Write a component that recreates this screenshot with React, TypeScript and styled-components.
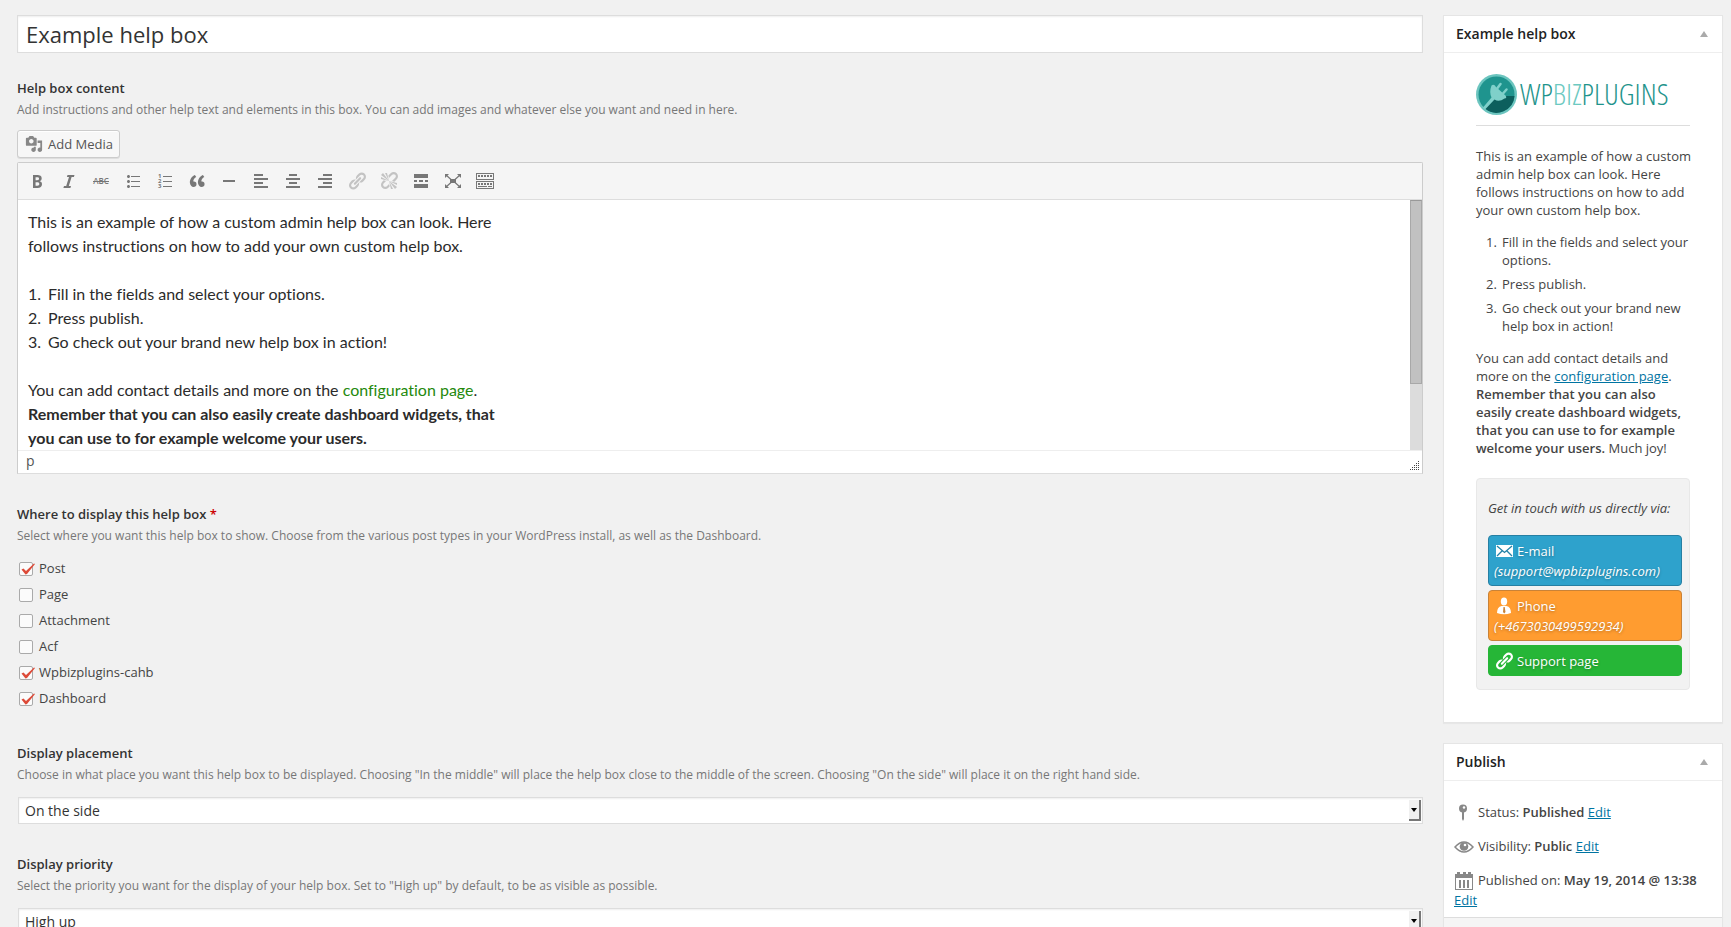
import React from "react";
import styled, { createGlobalStyle, css } from "styled-components";

const GlobalStyle = createGlobalStyle`
  *, *::before, *::after { box-sizing: border-box; }
  html { scrollbar-width: none; }
  body {
    margin: 0;
    background: #f1f1f1;
    color: #444;
    font-family: "Open Sans", sans-serif;
    font-size: 13px;
    line-height: 18px;
  }
  a { color: #0074a2; }
  strong { font-weight: 600; }
  p, h1, h2, ol, ul { margin: 0; padding: 0; }
  button, input, select { font-family: inherit; }
`;

const Page = styled.div`
  display: flex;
  align-items: flex-start;
  gap: 20px;
  padding: 15px 8px 20px 17px;
`;

const Main = styled.main`
  flex: 1;
  min-width: 0;
`;

const Aside = styled.aside`
  flex: none;
  width: 280px;
  display: flex;
  flex-direction: column;
  gap: 20px;
`;

const TitleInput = styled.input`
  display: block;
  width: 100%;
  height: 38px;
  padding: 0 8px;
  border: 1px solid #ddd;
  border-radius: 0;
  background: #fff;
  box-shadow: inset 0 1px 2px rgba(0, 0, 0, 0.07);
  color: #333;
  font-size: 22px;
  outline: none;
`;

const Field = styled.section`
  margin-top: 31px;
`;

const FirstField = styled(Field)`
  margin-top: 26px;
`;

const labelText = css`
  display: block;
  color: #333;
  font-size: 13px;
  font-weight: 600;
  line-height: 18px;
`;

const FieldTitle = styled.h2`
  ${labelText}
`;

const FieldLabel = styled.label`
  ${labelText}
`;

const Required = styled.span`
  color: #c00;
`;

const Description = styled.p`
  margin: 4px 0 11px;
  color: #777;
  font-size: 12px;
  line-height: 18px;
`;

const MediaButton = styled.button`
  display: flex;
  align-items: center;
  gap: 5px;
  height: 28px;
  margin-bottom: 4px;
  padding: 0 6px 0 7px;
  border: 1px solid #ccc;
  border-radius: 3px;
  background: #f7f7f7;
  box-shadow: inset 0 1px 0 #fff, 0 1px 0 rgba(0, 0, 0, 0.08);
  color: #555;
  font-size: 13px;
`;

const Editor = styled.div`
  border: 1px solid #ccc;
  border-bottom-color: #ddd;
  border-radius: 2px 2px 0 0;
  background: #fff;
`;

const Toolbar = styled.div`
  display: flex;
  gap: 4px;
  padding: 4px 5px;
  border-bottom: 1px solid #ddd;
  background: #f5f5f5;
`;

const ToolButton = styled.button`
  display: grid;
  place-items: center;
  width: 28px;
  height: 28px;
  padding: 0;
  border: 0;
  background: none;
  color: #777;
  &:disabled { color: #c3c3c3; }
`;

const EditorBody = styled.div`
  display: flex;
  height: 250px;
`;

const numbered = css`
  ol { list-style: none; counter-reset: step; }
  li { display: flex; counter-increment: step; }
  li::before { content: counter(step) "."; flex: none; }
`;

const EditorText = styled.div`
  ${numbered}
  flex: 1;
  min-width: 0;
  padding: 10px 10px 0;
  overflow: hidden;
  color: #2b2b2b;
  font-family: Lato, sans-serif;
  font-size: 16px;
  font-variant-ligatures: none;
  line-height: 24px;
  outline: none;
  p, ol { max-width: 474px; margin-bottom: 24px; }
  li::before { width: 20px; }
  strong { font-weight: 700; }
  a { color: #24890d; text-decoration: none; }
`;

const ScrollTrack = styled.div`
  width: 12px;
  background: #dcdcdc;
`;

const ScrollThumb = styled.div`
  height: 184px;
  border: 1px solid #a8a8a8;
  border-top-color: #999;
  background: #c1c1c1;
`;

const StatusBar = styled.div`
  display: flex;
  align-items: center;
  justify-content: space-between;
  height: 23px;
  padding: 0 2px 2px 8px;
  border-top: 1px solid #eee;
  color: #555;
  font-size: 14px;
  svg { align-self: flex-end; }
`;

const CheckList = styled.ul`
  margin-top: -1px;
  padding-bottom: 2px;
  list-style: none;
`;

const CheckLabel = styled.label`
  display: flex;
  align-items: center;
  gap: 6px;
  height: 26px;
  padding-left: 2px;
  color: #444;
`;

const CheckBoxWrap = styled.span`
  position: relative;
  display: grid;
  width: 14px;
  height: 14px;
  margin-top: 2px;
  svg {
    position: absolute;
    left: 2px;
    top: 1px;
    visibility: hidden;
    pointer-events: none;
  }
  input:checked + svg { visibility: visible; }
`;

const CheckInput = styled.input`
  appearance: none;
  width: 14px;
  height: 14px;
  margin: 0;
  border: 1px solid #aaa;
  border-radius: 2px;
  background: #fbfbfb;
`;

const SelectWrap = styled.div`
  position: relative;
  margin: 13px 0 3px 1px;
`;

const Select = styled.select`
  appearance: none;
  display: block;
  width: 100%;
  height: 27px;
  padding: 0 16px 0 6px;
  border: 1px solid #ddd;
  border-radius: 0;
  background: #fff;
  box-shadow: inset 0 1px 2px rgba(0, 0, 0, 0.07);
  color: #333;
  font-size: 14px;
`;

const SelectArrow = styled.span`
  position: absolute;
  top: 3px;
  right: 2px;
  bottom: 3px;
  display: grid;
  place-items: center;
  width: 12px;
  border-right: 2px solid #777;
  border-bottom: 2px solid #777;
  background: #f0f0f0;
  pointer-events: none;
`;

const Box = styled.section`
  border: 1px solid #e5e5e5;
  background: #fff;
  box-shadow: 0 1px 1px rgba(0, 0, 0, 0.04);
`;

const BoxHeader = styled.header`
  display: flex;
  align-items: center;
  justify-content: space-between;
  height: 37px;
  padding: 0 12px;
  border-bottom: 1px solid #eee;
`;

const BoxTitle = styled.h2`
  color: #222;
  font-size: 14px;
  font-weight: 600;
  line-height: 20px;
`;

const ToggleButton = styled.button`
  display: grid;
  place-items: center;
  width: 12px;
  height: 20px;
  padding: 0;
  border: 0;
  background: none;
  color: #aaa;
`;

const HelpBody = styled.div`
  padding: 20px 32px 32px;
`;

const Logo = styled.div`
  display: flex;
  align-items: center;
  gap: 3px;
  height: 42px;
`;

const LogoText = styled.span`
  color: #1f948c;
  font-family: "Open Sans Condensed Light", "Open Sans Light Condensed", "Open Sans Condensed", Lato, sans-serif;
  font-size: 30px;
  font-weight: 300;
  line-height: 42px;
`;

const LogoAccent = styled.span`
  color: #6cc9c1;
`;

const Divider = styled.hr`
  margin: 10px 0 21px;
  border: 0;
  border-top: 1px solid #ddd;
`;

const HelpText = styled.div`
  ${numbered}
  margin-right: -4px;
  ol { margin: 14px 0; padding-left: 10px; }
  li { margin-bottom: 6px; }
  li::before { width: 16px; }
`;

const ContactBox = styled.div`
  display: flex;
  flex-direction: column;
  gap: 4px;
  margin-top: 21px;
  padding: 20px 7px 13px 11px;
  border: 1px solid #e8e8e8;
  border-radius: 4px;
  background: #f2f2f2;
`;

const ContactIntro = styled.p`
  margin-bottom: 14px;
  font-style: italic;
`;

const ContactLink = styled.a<{ $bg: string; $line: string }>`
  display: block;
  padding: 5px 5px 4px;
  border: 1px solid ${(p) => p.$line};
  border-radius: 4px;
  background: ${(p) => p.$bg};
  color: #fff;
  line-height: 20px;
  text-decoration: none;
  text-shadow: 0 1px 3px rgba(0, 0, 0, 0.3);
`;

const ContactName = styled.span`
  display: flex;
  align-items: center;
  gap: 3px;
`;

const ContactDetail = styled.em`
  display: block;
`;

const PublishBody = styled.div`
  padding: 14px 10px 0;
`;

const PublishRow = styled.div`
  padding: 7px 0;
  line-height: 20px;
  svg {
    margin: -4px 4px -2px 0;
    vertical-align: middle;
    color: #888;
  }
`;

const PublishFooter = styled.footer`
  height: 58px;
  border-top: 1px solid #ddd;
  background: #f5f5f5;
`;

type IconProps = { size?: number; children: React.ReactNode };

const Icon = ({ size = 20, children }: IconProps) => (
  <svg width={size} height={size} viewBox="0 0 20 20" fill="currentColor" aria-hidden="true">
    {children}
  </svg>
);

const LINK =
  "M17.74 2.76c1.68 1.69 1.68 4.41 0 6.1l-1.53 1.52c-1.12 1.12-2.7 1.47-4.14 1.09l2.62-2.61.76-.77.76-.76c.84-.84.84-2.2 0-3.04-.84-.85-2.2-.85-3.04 0l-.77.76-3.38 3.38c-.37-1.44-.02-3.02 1.1-4.14l1.52-1.53c1.69-1.68 4.42-1.68 6.1 0zM8.59 13.43l5.34-5.34c.42-.42.42-1.1 0-1.52-.44-.43-1.13-.39-1.53 0l-5.33 5.34c-.42.42-.42 1.1 0 1.52.44.43 1.13.39 1.52 0zm-.76 2.29l4.14-4.15c.38 1.44.03 3.02-1.09 4.14l-1.52 1.53c-1.69 1.68-4.41 1.68-6.1 0-1.68-1.68-1.68-4.42 0-6.1l1.53-1.52c1.12-1.12 2.7-1.47 4.14-1.1l-4.14 4.15c-.85.84-.85 2.2 0 3.05.84.84 2.2.84 3.04 0z";

const glyph = (size: number, weight: number) => ({
  fontFamily: '"Open Sans", sans-serif',
  fontSize: size,
  fontWeight: weight,
});

const tools: { name: string; disabled?: boolean; art: React.ReactNode }[] = [
  {
    name: "Bold",
    art: (
      <path d="M6 4v13h4.54c1.37 0 2.46-.33 3.26-1 .8-.66 1.2-1.58 1.2-2.77 0-.84-.17-1.51-.51-2.01s-.9-.85-1.67-1.03v-.09c.57-.1 1.02-.4 1.36-.9s.51-1.13.51-1.91c0-1.14-.39-1.98-1.17-2.5C12.75 4.26 11.5 4 9.78 4H6zm2.57 5.15V6.26h1.36c.73 0 1.27.11 1.61.32.34.22.51.58.51 1.07 0 .54-.16.92-.47 1.15s-.82.35-1.51.35h-1.5zm0 2.19h1.6c1.44 0 2.16.53 2.16 1.61 0 .6-.17 1.05-.51 1.34s-.86.43-1.57.43H8.57v-3.38z" />
    ),
  },
  { name: "Italic", art: <path d="M15.500 4h-7l-.6 2h2.100l-2.800 9H5l-.6 2h7l.6-2H9.800l2.800-9h2.300z" /> },
  {
    name: "Strikethrough",
    art: (
      <>
        <text x="10" y="13" textAnchor="middle" style={glyph(8, 600)}>ABC</text>
        <path d="M2 10h16v1H2z" />
      </>
    ),
  },
  {
    name: "Bulleted list",
    art: (
      <path d="M5.5 7C4.67 7 4 6.33 4 5.5 4 4.68 4.67 4 5.5 4 6.32 4 7 4.68 7 5.5 7 6.33 6.32 7 5.5 7zM8 5h9v1H8V5zm-2.5 7c-.83 0-1.5-.67-1.5-1.5C4 9.68 4.67 9 5.5 9c.82 0 1.5.68 1.5 1.5 0 .83-.68 1.5-1.5 1.5zM8 10h9v1H8v-1zm-2.5 7c-.83 0-1.5-.67-1.5-1.5 0-.82.67-1.5 1.5-1.5.82 0 1.5.68 1.5 1.5 0 .83-.68 1.5-1.5 1.5zM8 15h9v1H8v-1z" />
    ),
  },
  {
    name: "Numbered list",
    art: (
      <>
        <text x="3" y="7" style={glyph(6, 700)}>1</text>
        <text x="3" y="12" style={glyph(6, 700)}>2</text>
        <text x="3" y="17" style={glyph(6, 700)}>3</text>
        <path d="M8 5h9v1H8zM8 10h9v1H8zM8 15h9v1H8z" />
      </>
    ),
  },
  {
    name: "Blockquote",
    art: (
      <path d="M9.49 13.22c0-.74-.2-1.38-.61-1.9-.62-.78-1.83-.88-2.53-.72-.29-1.65 1.11-3.75 2.92-4.65L7.88 4c-2.73 1.3-5.42 4.28-4.96 8.05C3.21 14.43 4.59 16 6.54 16c.85 0 1.56-.25 2.12-.75s.83-1.18.83-2.03zm8.05 0c0-.74-.2-1.38-.61-1.9-.63-.78-1.83-.88-2.53-.72-.29-1.65 1.11-3.75 2.92-4.65L15.93 4c-2.73 1.3-5.41 4.28-4.95 8.05.29 2.38 1.66 3.95 3.61 3.95.85 0 1.56-.25 2.12-.75s.83-1.18.83-2.03z" />
    ),
  },
  { name: "Horizontal line", art: <path d="M4 9h12v2H4z" /> },
  { name: "Align left", art: <path d="M3 3h9v2H3zM3 7h14v2H3zM3 11h9v2H3zM3 15h14v2H3z" /> },
  { name: "Align center", art: <path d="M6 3h8v2H6zM3 7h14v2H3zM6 11h8v2H6zM3 15h14v2H3z" /> },
  { name: "Align right", art: <path d="M8 3h9v2H8zM3 7h14v2H3zM8 11h9v2H8zM3 15h14v2H3z" /> },
  { name: "Insert link", disabled: true, art: <path d={LINK} /> },
  {
    name: "Remove link",
    disabled: true,
    art: (
      <path d="M17.74 2.26c1.68 1.69 1.68 4.41 0 6.1l-1.53 1.52c-.32.33-.69.58-1.08.77L13 10l1.69-1.64.76-.77.76-.76c.84-.84.84-2.2 0-3.04-.84-.85-2.2-.85-3.04 0l-.77.76-.76.76L10 7l-.65-2.14c.19-.38.44-.75.77-1.07l1.52-1.53c1.69-1.68 4.42-1.68 6.1 0zM2 4l8 6-6-8zm4-2l4 8-2-8H6zM2 6l8 4-8-2V6zm7.36 7.69L10 13l.74 2.35-1.38 1.39c-1.69 1.68-4.41 1.68-6.1 0-1.68-1.68-1.68-4.42 0-6.1l1.39-1.38L7 10l-.69.64-1.52 1.53c-.85.84-.85 2.2 0 3.04.84.85 2.2.85 3.04 0zM18 16l-8-6 6 8zm-4 2l-4-8 2 8h2zm4-4l-8-4 8 2v2z" />
    ),
  },
  { name: "Insert More tag", art: <path d="M3 3h14v4H3zM3 9h3v2H3zM8 9h4v2H8zM14 9h3v2h-3zM3 13h14v4H3z" /> },
  {
    name: "Distraction free",
    art: (
      <>
        <path d="M7 8h6v4H7z" />
        <path d="M2 3h4L2 7zM18 3h-4l4 4zM2 17h4l-4-4zM18 17h-4l4-4z" />
        <path d="M3 4l5 4.500M17 4l-5 4.500M3 16l5-4.500M17 16l-5-4.500" stroke="currentColor" strokeWidth="1.200" />
      </>
    ),
  },
  {
    name: "Toolbar toggle",
    art: (
      <path
        fillRule="evenodd"
        d="M1 2h18v7H1zM2 3v5h16V3zM1 10h18v8H1zM2 11v6h16v-6zM3 4h2v2H3zM6 4h2v2H6zM9 4h2v2H9zM12 4h2v2h-2zM15 4h2v2h-2zM3 12h2v2H3zM6 12h2v2H6zM9 12h2v2H9zM12 12h2v2h-2zM15 12h2v2h-2zM3 15h9v1H3zM13 15h4v1h-4z"
      />
    ),
  },
];

const places = [
  { name: "Post", on: true },
  { name: "Page", on: false },
  { name: "Attachment", on: false },
  { name: "Acf", on: false },
  { name: "Wpbizplugins-cahb", on: true },
  { name: "Dashboard", on: true },
];

const CheckOption = ({ name, on }: { name: string; on: boolean }) => (
  <li>
    <CheckLabel>
      <CheckBoxWrap>
        <CheckInput type="checkbox" defaultChecked={on} />
        <svg width="14" height="12" viewBox="0 0 14 12" aria-hidden="true">
          <path d="M0.500 6.500L2.500 5.500L5 8L13 0.500L14 1L6 11L4.500 11.500Z" fill="#dd4b39" />
        </svg>
      </CheckBoxWrap>
      {name}
    </CheckLabel>
  </li>
);

type SelectFieldProps = { id: string; label: string; help: string; value: string; other: string };

const SelectField = ({ id, label, help, value, other }: SelectFieldProps) => (
  <Field>
    <FieldLabel htmlFor={id}>{label}</FieldLabel>
    <Description>{help}</Description>
    <SelectWrap>
      <Select id={id} defaultValue={value}>
        <option>{value}</option>
        <option>{other}</option>
      </Select>
      <SelectArrow>
        <svg width="6" height="4" viewBox="0 0 6 4" aria-hidden="true">
          <path d="M0 0h6L3 4z" fill="#000" />
        </svg>
      </SelectArrow>
    </SelectWrap>
  </Field>
);

const PanelHeader = ({ title }: { title: string }) => (
  <BoxHeader>
    <BoxTitle>{title}</BoxTitle>
    <ToggleButton aria-label={`Toggle ${title}`}>
      <svg width="8" height="6" viewBox="0 0 8 6" aria-hidden="true">
        <path d="M4 0l4 6H0z" fill="currentColor" />
      </svg>
    </ToggleButton>
  </BoxHeader>
);

const PlugBadge = () => (
  <svg width="41" height="41" viewBox="0 0 41 41" aria-hidden="true">
    <circle cx="20.500" cy="20.500" r="20.500" fill="#6cc5bf" />
    <circle cx="20.500" cy="20.500" r="18" fill="#1f948e" />
    <path d="M38.500 22A18 18 0 0 1 9 34.500L21 22z" fill="#0c5f5d" />
    <g fill="#7fd0ca">
      <path d="M15.500 11.500Q18 9.500 20 13L29.500 21.500Q31.500 24 28.500 24.500Q23 28.500 18.500 25.500L9 35.500L7 33.500L15.500 23.500Q13 18 15.500 11.500z" />
      <path d="M21.500 14L24.500 10M27 19.500L30.500 15.500" stroke="#7fd0ca" strokeWidth="2.500" strokeLinecap="round" />
    </g>
  </svg>
);

export default function App() {
  return (
    <>
      <GlobalStyle />
      <Page>
        <Main>
          <TitleInput aria-label="Title" defaultValue="Example help box" />

          <FirstField>
            <FieldTitle>Help box content</FieldTitle>
            <Description>
              Add instructions and other help text and elements in this box. You can add images and whatever else you
              want and need in here.
            </Description>
            <MediaButton type="button">
              <Icon size={18}>
                <path
                  fill="#888"
                  d="M13 11V4c0-.55-.45-1-1-1h-1.67L9 1H5L3.67 3H2c-.55 0-1 .45-1 1v7c0 .55.45 1 1 1h10c.55 0 1-.45 1-1zM7 4.500c1.38 0 2.500 1.120 2.500 2.500S8.380 9.500 7 9.500 4.500 8.380 4.500 7 5.620 4.500 7 4.500zM14 6h5v10.500c0 1.380-1.120 2.500-2.500 2.500S14 17.880 14 16.500s1.120-2.500 2.500-2.500c.17 0 .34.02.5.05V9h-3V6zm-4 8.050V13h2v3.500c0 1.380-1.120 2.500-2.500 2.500S7 17.880 7 16.500 8.120 14 9.500 14c.17 0 .34.02.5.05z"
                />
              </Icon>
              Add Media
            </MediaButton>
            <Editor>
              <Toolbar role="toolbar" aria-label="Formatting">
                {tools.map((t) => (
                  <ToolButton key={t.name} type="button" aria-label={t.name} disabled={t.disabled}>
                    <Icon>{t.art}</Icon>
                  </ToolButton>
                ))}
              </Toolbar>
              <EditorBody>
                <EditorText role="textbox" aria-label="Help box content" aria-multiline="true" tabIndex={0}>
                  <p>
                    This is an example of how a custom admin help box can look. Here follows instructions on how to add
                    your own custom help box.
                  </p>
                  <ol>
                    <li>Fill in the fields and select your options.</li>
                    <li>Press publish.</li>
                    <li>Go check out your brand new help box in action!</li>
                  </ol>
                  <p>
                    You can add contact details and more on the <a href="#configuration">configuration page</a>.{" "}
                    <strong>
                      Remember that you can also easily create dashboard widgets, that you can use to for example
                      welcome your users.
                    </strong>
                  </p>
                </EditorText>
                <ScrollTrack>
                  <ScrollThumb />
                </ScrollTrack>
              </EditorBody>
              <StatusBar>
                p
                <svg width="10" height="10" viewBox="0 0 10 10" fill="#444" aria-hidden="true">
                  <path d="M8 0h1v1H8zM6 2h1v1H6zM8 2h1v1H8zM4 4h1v1H4zM6 4h1v1H6zM8 4h1v1H8zM2 6h1v1H2zM4 6h1v1H4zM6 6h1v1H6zM8 6h1v1H8zM0 8h1v1H0zM2 8h1v1H2zM4 8h1v1H4zM6 8h1v1H6zM8 8h1v1H8z" />
                </svg>
              </StatusBar>
            </Editor>
          </FirstField>

          <Field>
            <FieldTitle>
              Where to display this help box <Required>*</Required>
            </FieldTitle>
            <Description>
              Select where you want this help box to show. Choose from the various post types in your WordPress
              install, as well as the Dashboard.
            </Description>
            <CheckList>
              {places.map((p) => (
                <CheckOption key={p.name} {...p} />
              ))}
            </CheckList>
          </Field>

          <SelectField
            id="placement"
            label="Display placement"
            help={
              'Choose in what place you want this help box to be displayed. Choosing "In the middle" will place the help box close to the middle of the screen. Choosing "On the side" will place it on the right hand side.'
            }
            value="On the side"
            other="In the middle"
          />
          <SelectField
            id="priority"
            label="Display priority"
            help={
              'Select the priority you want for the display of your help box. Set to "High up" by default, to be as visible as possible.'
            }
            value="High up"
            other="Low down"
          />
        </Main>

        <Aside>
          <Box>
            <PanelHeader title="Example help box" />
            <HelpBody>
              <Logo>
                <PlugBadge />
                <LogoText>
                  WP<LogoAccent>BIZ</LogoAccent>PLUGINS
                </LogoText>
              </Logo>
              <Divider />
              <HelpText>
                <p>
                  This is an example of how a custom admin help box can look. Here follows instructions on how to add
                  your own custom help box.
                </p>
                <ol>
                  <li>Fill in the fields and select your options.</li>
                  <li>Press publish.</li>
                  <li>Go check out your brand new help box in action!</li>
                </ol>
                <p>
                  You can add contact details and more on the <a href="#configuration">configuration page</a>.{" "}
                  <strong>
                    Remember that you can also easily create dashboard widgets, that you can use to for example welcome
                    your users.
                  </strong>{" "}
                  Much joy!
                </p>
              </HelpText>
              <ContactBox>
                <ContactIntro>Get in touch with us directly via:</ContactIntro>
                <ContactLink href="#email" $bg="#2ea2cc" $line="#267fa3">
                  <ContactName>
                    <Icon>
                      <path d="M2 4h17v12H2z" />
                      <path
                        d="M3 5l7.500 6.500L18 5M3 15l5-5M18 15l-5-5"
                        fill="none"
                        stroke="#2583a8"
                        strokeWidth="1.300"
                      />
                    </Icon>
                    E-mail
                  </ContactName>
                  <ContactDetail>(support@wpbizplugins.com)</ContactDetail>
                </ContactLink>
                <ContactLink href="#phone" $bg="#ff9c30" $line="#c98237">
                  <ContactName>
                    <Icon>
                      <ellipse cx="10" cy="5.500" rx="3.200" ry="4" />
                      <path d="M3 17q0-6 4.500-7h5q4.500 1 4.500 7-7 2.500-14 0z" />
                      <path d="M9.500 11h1.200l.8 5-1.300 1.500L9 16z" fill="#c98237" />
                    </Icon>
                    Phone
                  </ContactName>
                  <ContactDetail>(+4673030499592934)</ContactDetail>
                </ContactLink>
                <ContactLink href="#support" $bg="#26b637" $line="#26b637">
                  <ContactName>
                    <Icon>
                      <path d={LINK} />
                    </Icon>
                    Support page
                  </ContactName>
                </ContactLink>
              </ContactBox>
            </HelpBody>
          </Box>

          <Box>
            <PanelHeader title="Publish" />
            <PublishBody>
              <PublishRow>
                <Icon>
                  <circle cx="9" cy="5.500" r="4" />
                  <path d="M8 9h2v7l-1 2-1-2z" />
                  <circle cx="10" cy="4.500" r="1.200" fill="#fff" />
                </Icon>
                Status: <strong>Published</strong> <a href="#status">Edit</a>
              </PublishRow>
              <PublishRow>
                <Icon>
                  <path d="M1 10Q10 0 19 10Q10 20 1 10z" fill="none" stroke="currentColor" strokeWidth="1.500" />
                  <circle cx="10" cy="9.500" r="4.300" />
                  <circle cx="11" cy="8" r="1.300" fill="#fff" />
                </Icon>
                Visibility: <strong>Public</strong> <a href="#visibility">Edit</a>
              </PublishRow>
              <PublishRow>
                <Icon>
                  <path
                    fillRule="evenodd"
                    d="M1 3h2V1h3v2h3V1h3v2h2V1h3v2h2v16H1zM2 7v11h16V7zM5 9h2v8H5zM9 9h2v8H9zM13 9h2v8h-2z"
                  />
                </Icon>
                Published on: <strong>May 19, 2014 @ 13:38</strong> <a href="#date">Edit</a>
              </PublishRow>
            </PublishBody>
            <PublishFooter />
          </Box>
        </Aside>
      </Page>
    </>
  );
}
